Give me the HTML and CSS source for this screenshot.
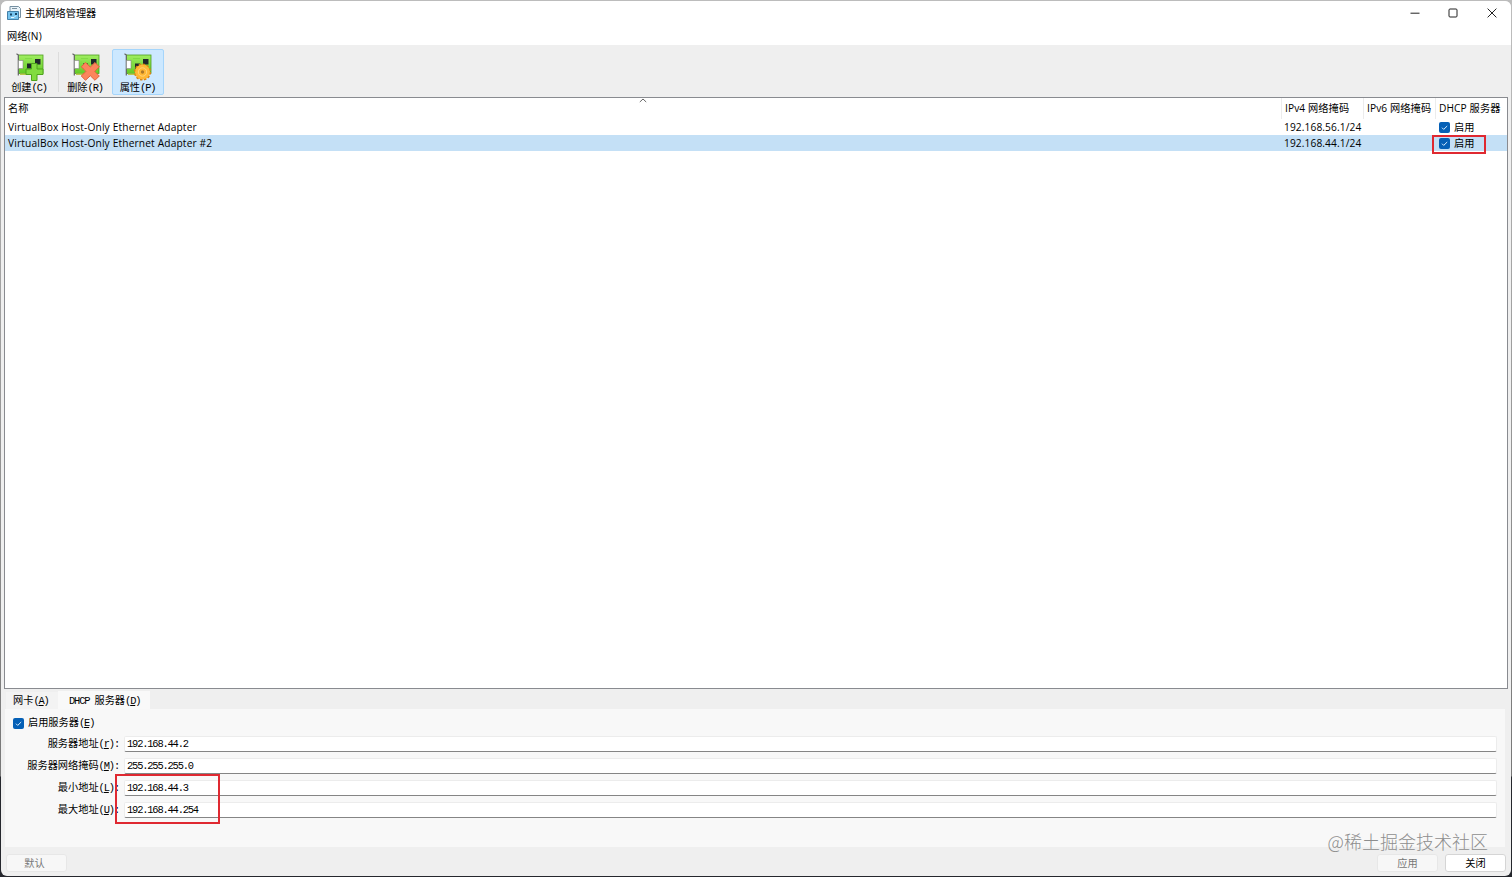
FILE: index.html
```html
<!DOCTYPE html>
<html lang="zh-CN">
<head>
<meta charset="UTF-8" />
<meta name="viewport" content="width=device-width, initial-scale=1.0" />
<title>主机网络管理器</title>
<link rel="stylesheet" href="styles.css">
</head>
<body>
  <svg class="defs">
    <linearGradient id="green" x1="0" y1="0" x2="0" y2="1"><stop offset="0" stop-color="#a0ee61"/><stop offset="1" stop-color="#62c925"/></linearGradient>
    <symbol id="card" viewBox="0 0 28 28">
      <rect x="2.500" y="2" width="24.500" height="18.500" fill="url(#green)" stroke="#4f9f20" stroke-width=".8"/>
      <path d="M4 20.500h8v1.500H4z" fill="#b9c94a"/>
      <path d="M.5.8 2.300 2v20.500" fill="none" stroke="#666" stroke-width="1.200"/>
      <rect x="2.500" y="7.500" width="4.500" height="8" fill="#fff" stroke="#888" stroke-width=".6"/>
      <path d="M11 10.500h5v5h-5zM19 6h5.500v5.500H19z" fill="#20282b"/>
      <path d="M9 5.500h7M17 9v4M9 8v8" stroke="#7dd844" stroke-width=".8"/>
    </symbol>
  </svg>
  <div class="window">
    <header class="titlebar">
      <svg class="app-icon" viewBox="0 0 14 14">
        <path d="M3 .5h8.500l2 2v9H3z" fill="#e9f3f9" stroke="#7590a2"/>
        <path d="M5 2.500h5" stroke="#7d929f"/>
        <path d="M.5 5.500h11v8H.5z" fill="#75c3ee" stroke="#4480a8"/>
        <path d="M3 7.500h2v2H3zM8 7h2v2H8z" fill="#174467"/>
        <path d="M4 11.500h3l2-2" fill="none" stroke="#e9f7ff"/>
      </svg>
      <h1>主机网络管理器</h1>
      <div class="controls">
        <svg viewBox="0 0 10 10"><path d="M.5 5.200h9"/></svg>
        <svg viewBox="0 0 10 10"><rect x="1" y="1" width="8" height="8" rx="1"/></svg>
        <svg viewBox="0 0 10 10"><path d="m.6.6 8.800 8.800M9.400.6.6 9.400"/></svg>
      </div>
    </header>
    <nav class="menu">网络(N)</nav>
    <div class="toolbar">
      <button class="tool">
        <svg viewBox="0 0 28 28"><use href="#card"/><path d="M15.500 10.500h5.500v5.500h6v5.500h-6v6h-5.500v-6H10V16h5.500z" fill="#82dc40" stroke="#4ea41d"/></svg>
        <span>创建<i>(C)</i></span>
      </button>
      <div class="divider"></div>
      <button class="tool">
        <svg viewBox="0 0 28 28"><use href="#card"/><path d="m13.500 9.500 4.800 4.500 4.700-4.500 4.300 4.300-4.600 4.600 4.600 4.600-4.300 4.300-4.700-4.600-4.800 4.600L9.300 23l4.600-4.600-4.600-4.600z" fill="#fb855c" stroke="#e0623e"/></svg>
        <span>删除<i>(R)</i></span>
      </button>
      <button class="tool active">
        <svg viewBox="0 0 28 28"><use href="#card"/><circle cx="18.500" cy="19" r="7.600" fill="#ffb02c" stroke="#d98316" stroke-width="2" stroke-dasharray="2.400 1.580"/><circle cx="18.500" cy="19" r="7.300" fill="#ffb735"/><circle cx="18.500" cy="19" r="4.200" fill="none" stroke="#ffd478"/><circle cx="18.500" cy="19" r="1.700" fill="#af7928"/></svg>
        <span>属性<i>(P)</i></span>
      </button>
    </div>

    <main class="adapters">
      <svg class="sort" viewBox="0 0 8 5"><path d="m.8 4 3.200-3 3.200 3"/></svg>
      <div class="row head">
        <div>名称</div>
        <div>IPv4 网络掩码</div>
        <div>IPv6 网络掩码</div>
        <div>DHCP 服务器</div>
      </div>
      <div class="row">
        <div class="name">VirtualBox Host-Only Ethernet Adapter</div>
        <div>192.168.56.1/24</div>
        <div></div>
        <div class="enabled"><svg class="check" viewBox="0 0 11 11"><path d="m3 5.700 1.700 1.700L8.200 4"/></svg>启用</div>
      </div>
      <div class="row selected">
        <div class="name">VirtualBox Host-Only Ethernet Adapter #2</div>
        <div>192.168.44.1/24</div>
        <div></div>
        <div class="enabled"><svg class="check" viewBox="0 0 11 11"><path d="m3 5.700 1.700 1.700L8.200 4"/></svg>启用<span class="mark mark-dhcp"></span></div>
      </div>
    </main>

    <div class="tabs">
      <div class="tab">网卡<i>(<u>A</u>)</i></div>
      <div class="tab current"><i>DHCP </i>服务器<i>(<u>D</u>)</i></div>
    </div>
    <section class="pane">
      <div class="enable"><svg class="check" viewBox="0 0 11 11"><path d="m3 5.700 1.700 1.700L8.200 4"/></svg><span>启用服务器<i>(<u>E</u>)</i></span></div>
      <div class="field"><label>服务器地址<i>(<u>r</u>):</i></label><div class="input">192.168.44.2</div></div>
      <div class="field"><label>服务器网络掩码<i>(<u>M</u>):</i></label><div class="input">255.255.255.0</div></div>
      <div class="field"><label>最小地址<i>(<u>L</u>):</i></label><div class="input">192.168.44.3</div><span class="mark mark-range"></span></div>
      <div class="field"><label>最大地址<i>(<u>U</u>):</i></label><div class="input">192.168.44.254</div></div>
    </section>
    <footer>
      <button class="disabled default">默认</button>
      <button class="disabled apply">应用</button>
      <button>关闭</button>
    </footer>
    <div class="watermark">@稀土掘金技术社区</div>
  </div>
</body>
</html>
```
FILE: styles.css
```css
* {
  box-sizing: border-box;
}

body {
  margin: 0;
  height: 877px;
  padding: 1px 1px 1px;
  overflow: hidden;
  background: linear-gradient(#bcbcbc 0, #bcbcbc 30px, #aaa 210px, #777 776px, #25272d 777px);
  font-family: "Open Sans", "Noto Sans CJK SC", sans-serif;
  font-size: 10.2px;
  color: #000;
}

.defs {
  position: absolute;
  width: 0;
  height: 0;
}

.window {
  position: relative;
  display: flex;
  flex-direction: column;
  height: 875px;
  overflow: hidden;
  border-radius: 6px;
  background: #efefef;
}

.titlebar {
  display: flex;
  align-items: center;
  height: 24px;
  padding: 0 14px 0 6px;
  background: #fff;
}

.app-icon {
  width: 14px;
  height: 14px;
}

h1 {
  margin: 0 0 0 4px;
  font-size: 10.2px;
  font-weight: 400;
  line-height: 24px;
}

.controls {
  display: flex;
  gap: 28px;
  margin-left: auto;
}

.controls svg {
  width: 10px;
  height: 10px;
  fill: none;
  stroke: #222;
  stroke-width: 1;
}

.controls svg:last-child {
  margin-left: 1px;
}

.menu {
  height: 20px;
  padding-left: 6px;
  background: #fff;
  letter-spacing: .15px;
  line-height: 22px;
}

i {
  font-family: "Liberation Mono", monospace;
  font-size: 10.4px;
  font-style: normal;
  letter-spacing: -1.14px;
  line-height: 1;
  white-space: pre;
}

u {
  text-underline-offset: 1px;
}

.toolbar {
  display: flex;
  height: 52px;
  padding: 4px 2px 2px 3px;
}

.tool {
  display: flex;
  flex-direction: column;
  align-items: center;
  width: 52px;
  height: 46px;
  padding: 3px 0 0;
  border: 1px solid transparent;
  border-radius: 2px;
  background: none;
  color: #000;
  font: 10.2px "Open Sans", "Noto Sans CJK SC", sans-serif;
}

.tool svg {
  width: 28px;
  height: 28px;
  margin-left: -1px;
}

.tool span {
  height: 13px;
  margin-left: -2px;
  line-height: 13px;
}

.tool.active {
  background: #cce8ff;
  border-color: #a5d5fb;
}

.tool.active span {
  margin-left: -1px;
}

.divider {
  width: 1px;
  height: 40px;
  margin: 3px 1px 0 2px;
  background: #dcdcdc;
}

.adapters {
  position: relative;
  height: 592px;
  margin: 0 3px;
  border: 1px solid #898b90;
  background: #fff;
}

.sort {
  position: absolute;
  left: 634px;
  top: 0;
  width: 8px;
  height: 5px;
  fill: none;
  stroke: #666;
}

.row {
  display: grid;
  grid-template-columns: 1276px 82px 72px 1fr;
  height: 16px;
  letter-spacing: .1px;
  line-height: 16px;
  white-space: nowrap;
}

.row > div {
  padding-left: 3px;
}

.row > .name {
  letter-spacing: .15px;
}

.row.head {
  height: 21px;
  line-height: 20px;
}

.row.head > div + div {
  border-left: 1px solid #ececec;
}

.row.selected {
  background: #c4e0f6;
}

.row > .enabled {
  position: relative;
  display: flex;
  align-items: center;
  gap: 4px;
  padding-left: 4px;
}

.check {
  width: 11px;
  height: 11px;
  border-radius: 2px;
  background: #0560b6;
  fill: none;
  stroke: #d9eeff;
}

.mark {
  position: absolute;
  z-index: 1;
  border: 2px solid #df2931;
}

.mark-dhcp {
  left: -3px;
  top: 0;
  width: 54px;
  height: 19px;
}

.tabs {
  display: flex;
  height: 20px;
  padding: 2px 0 0 5px;
}

.tab {
  width: 52px;
  height: 17px;
  margin-top: 1px;
  padding-left: 7px;
  background: #f3f3f3;
  line-height: 17px;
}

.tab.current {
  width: 92px;
  height: 18px;
  margin-top: 0;
  padding-left: 11px;
  background: #f9f9f9;
  line-height: 18px;
}

.pane {
  height: 138px;
  margin: 0 6px 0 4px;
  padding: 6px 8px 0;
  background: #f8f8f8;
}

.enable {
  display: flex;
  align-items: center;
  height: 16px;
  margin-bottom: 5px;
}

.enable span {
  height: 16px;
  line-height: 15px;
}

.enable .check {
  margin-right: 4px;
}

.field {
  position: relative;
  display: flex;
  justify-content: space-between;
  height: 16px;
  margin-bottom: 6px;
  line-height: 15px;
}

.field label {
  width: 106px;
  text-align: right;
  white-space: nowrap;
}

.input {
  width: 1373px;
  padding-left: 2px;
  border: 1px solid #ececec;
  border-bottom-color: #858585;
  border-radius: 2px;
  background: #fff;
  font-family: "Liberation Mono", monospace;
  font-size: 10.4px;
  letter-spacing: -1.17px;
  line-height: 14px;
}

.mark-range {
  left: 102px;
  top: -6px;
  width: 105px;
  height: 50px;
}

footer {
  display: flex;
  gap: 7px;
  padding: 7px 5px 0;
}

footer button {
  width: 61px;
  height: 18px;
  padding: 0;
  border: 1px solid #d5d5d5;
  border-radius: 3px;
  background: #fff;
  color: #000;
  font: 10.2px/16px "Noto Sans CJK SC", sans-serif;
}

footer .disabled {
  border-color: #e7e7e7;
  background: #f7f7f7;
  color: #777;
}

footer .default {
  padding-right: 4px;
}

footer .apply {
  margin-left: auto;
}

.watermark {
  position: absolute;
  right: 23px;
  bottom: 21px;
  color: #8e8e8e;
  font: 300 18px/28px "Noto Sans CJK SC", sans-serif;
}
```
